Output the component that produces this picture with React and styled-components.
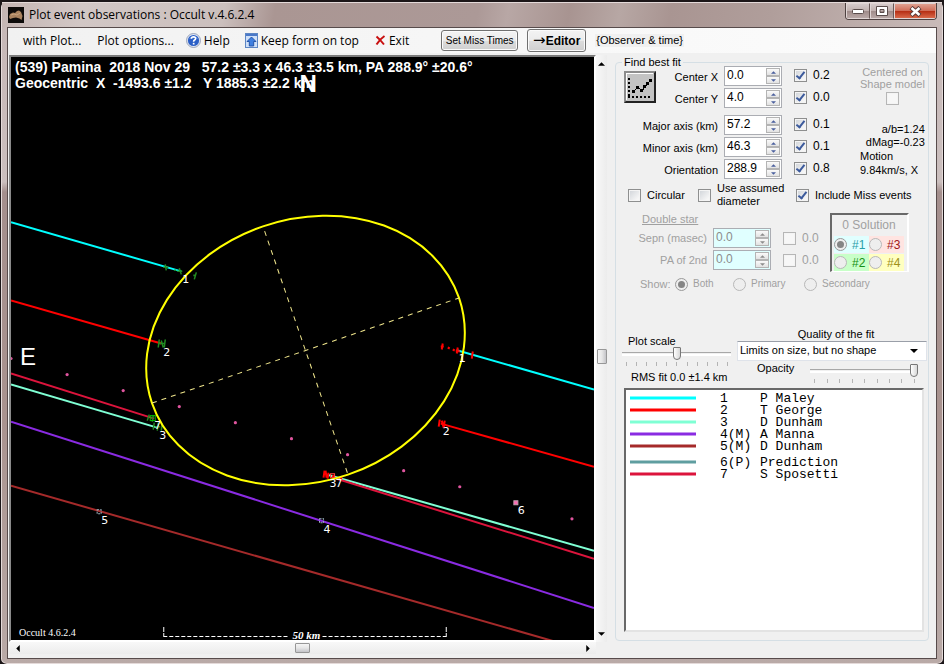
import React from "react";
import styled, { createGlobalStyle, css } from "styled-components";

const SANS = '"Liberation Sans", Arial, sans-serif';
const MENU = '"Open Sans", "Noto Sans", sans-serif';

const GlobalStyle = createGlobalStyle`
  *, *::before, *::after { box-sizing: border-box; }
  body { margin: 0; background: #1c1618; font: 12px/14px ${SANS}; color: #000; }
  button, input, select { font: inherit; color: inherit; margin: 0; }
`;

/* ---------- window frame ---------- */

const Window = styled.div`
  min-height: 100vh;
  display: flex;
  flex-direction: column;
  padding: 0 6px 5px;
  border: 1px solid #1c1618;
  border-top-width: 2px;
  border-bottom-width: 2px;
  border-radius: 7px;
  background: linear-gradient(180deg, #c6b7b6 0, #cbbfbe 180px, #a48f8d 190px, #a9938f 420px, #b9aaa7 100%);
  box-shadow: inset 0 0 0 1px #e4dad9;
`;

const TitleBar = styled.header`
  display: flex;
  align-items: center;
  height: 25px;
  margin: 0 -5px;
  padding: 0 5px 0 6px;
  gap: 5px;
  border-top: 1px solid #e4dad9;
  background: linear-gradient(100deg, #c4b5b3 0, #d2c7c5 80px, #cbbfbd 220px, #aa9693 270px, #ac9997 470px, #b8a7a5 500px, #a89491 560px, #b7a7a4 610px, #a99592 660px, #b09e9b 760px, #c9bbb9 100%);
`;

const Title = styled.h1`
  flex: 1;
  margin: 0;
  font: 12px/16px ${MENU};
`;

const Captions = styled.div`
  display: flex;
  align-self: flex-start;
  height: 17px;
  border: 1px solid #4e4140;
  border-top: 0;
  border-radius: 0 0 4px 4px;
  overflow: hidden;
`;

const Caption = styled.button`
  display: grid;
  place-items: center;
  width: ${(p) => (p.$close ? 42 : 24)}px;
  padding: 0;
  border: 1px solid #e0d5d4;
  border-right-color: ${(p) => (p.$close ? "#e59c8a" : "#6a5957")};
  background: ${(p) =>
    p.$close
      ? "linear-gradient(#e0a090 0, #cf6d58 48%, #b62f14 52%, #d9694a 100%)"
      : "linear-gradient(#d5caca 0, #c1b1af 48%, #a08c8a 52%, #b9a8a6 100%)"};
`;

const Client = styled.main`
  flex: 1;
  display: flex;
  flex-direction: column;
  border: 1px solid #574b4b;
  background: #f0f0f0;
`;

/* ---------- menu strip ---------- */

const MenuStrip = styled.nav`
  display: flex;
  align-items: center;
  height: 25px;
  padding-left: 15px;
  background: linear-gradient(90deg, #f1f1f1, #fcfcfc);
`;

const MenuItem = styled.button`
  display: flex;
  align-items: center;
  gap: 3px;
  margin-right: ${(p) => p.$after}px;
  padding: 0;
  border: 0;
  background: none;
  font: 12px/16px ${MENU};
  white-space: nowrap;
`;

const PushButton = styled.button`
  height: ${(p) => (p.$strong ? 23 : 21)}px;
  width: ${(p) => (p.$strong ? 59 : 77)}px;
  margin-right: 9px;
  padding: 0;
  border: 1px solid #707070;
  border-radius: 3px;
  background: linear-gradient(#f3f3f3 0, #ebebeb 50%, #dddddd 51%, #cfcfcf 100%);
  box-shadow: inset 0 0 0 1px #fbfbfb;
  font: ${(p) => (p.$strong ? `bold 12px/16px ${SANS}` : `10px/14px ${SANS}`)};
  white-space: nowrap;
`;

const ArrowGlyph = styled.span`
  font: 15px/12px "DejaVu Sans", sans-serif;
`;

const Hint = styled.span`
  padding: 0 1px;
  background: #f0f0f0;
  font-size: 11px;
  line-height: 13px;
`;

/* ---------- body ---------- */

const Body = styled.div`
  flex: 1;
  display: grid;
  grid-template-columns: minmax(0, 1fr) 11px 322px;
  grid-template-rows: minmax(0, 1fr) 12px;
  padding: 2px 7px 4px 1px;
`;

const PlotWell = styled.section`
  position: relative;
  border: 2px solid #fff;
  border-top-color: #7b7b7b;
  border-left-color: #8a8a8a;
  background: #000;
  overflow: hidden;
`;

const PlotSvg = styled.svg`
  display: block;
  width: 100%;
  height: 100%;
`;

const PlotHeading = styled.pre`
  position: absolute;
  top: 2px;
  left: 4px;
  margin: 0;
  color: #fff;
  font: bold 14px/16px ${SANS};
`;

const Bar = styled.div`
  display: flex;
  flex-direction: ${(p) => (p.$vertical ? "column" : "row")};
  align-items: center;
  justify-content: space-between;
  padding: ${(p) => (p.$vertical ? "3px 0" : "0 3px")};
  background: linear-gradient(${(p) => (p.$vertical ? "90deg" : "180deg")}, #f8f8f8, #ececec);
`;

const BarArrow = styled.button`
  display: grid;
  place-items: center;
  width: 11px;
  height: 11px;
  padding: 0;
  border: 0;
  background: none;
`;

const BarThumb = styled.div`
  width: ${(p) => (p.$vertical ? 10 : 15)}px;
  height: ${(p) => (p.$vertical ? 15 : 10)}px;
  margin-top: ${(p) => (p.$vertical ? 15 : 0)}px;
  border: 1px solid #979797;
  border-radius: 1px;
  background: linear-gradient(${(p) => (p.$vertical ? "90deg" : "180deg")}, #f5f5f5, #e6e6e6 50%, #c4c4c8);
`;

/* ---------- fit panel ---------- */

const Group = styled.fieldset`
  display: flex;
  flex-direction: column;
  min-width: 0;
  margin: 3px 0 1px 8px;
  padding: 0;
  border: 1px solid #d5dfe5;
  border-radius: 4px;
  font-size: 11px;
`;

const Legend = styled.legend`
  margin-left: 6px;
  padding: 0 2px;
  line-height: 8px;
`;

const FitGrid = styled.div`
  display: grid;
  grid-template-columns: 32px 56px 58px 60px 1fr;
  grid-template-rows: 20px 20px 25px 20px 20px;
  gap: 2px 6px;
  align-items: end;
  padding-left: 8px;
`;

const FitButton = styled.button`
  grid-column: 1;
  grid-row: 1 / 3;
  align-self: center;
  width: 32px;
  height: 32px;
  padding: 0;
  border: 2px solid;
  border-color: #8c8c8c #222 #222 #8c8c8c;
  background: #c3c3c3;
`;

const FitLabel = styled.label`
  grid-column: ${(p) => (p.$short ? "2" : "1 / 3")};
  grid-row: ${(p) => p.$row};
  text-align: right;
  line-height: 18px;
`;

const SpinBox = styled.div`
  ${(p) => p.$row && css`grid-column: 3; grid-row: ${p.$row};`}
  display: flex;
  width: 58px;
  height: 20px;
  padding: 1px;
  border: 1px solid #abadb3;
  background: ${(p) => (p.$off ? "#e0ffff" : "#fff")};
  color: ${(p) => (p.$off ? "#8c8c8c" : "#000")};
`;

const SpinInput = styled.input`
  flex: 1;
  min-width: 0;
  padding: 0 0 2px 1px;
  border: 0;
  background: none;
  font-size: 12px;
  line-height: 14px;
`;

const SpinButtons = styled.div`
  display: grid;
  grid-template-rows: 1fr 1fr;
  width: 14px;
`;

const SpinButton = styled.button`
  display: grid;
  place-items: center;
  padding: 0;
  border: 1px solid #b4b4b4;
  background: linear-gradient(#fafafa, #e2e2e2);
  color: ${(p) => (p.$off ? "#8c8c8c" : "#4a5f9e")};
`;

const Check = styled.label`
  ${(p) => p.$row && css`grid-column: 4; grid-row: ${p.$row}; padding-left: 6px; height: 18px; margin-bottom: 2px;`}
  display: flex;
  align-items: center;
  gap: 6px;
  color: ${(p) => (p.$off ? "#a0a0a0" : "#000")};
  font-size: ${(p) => (p.$value ? 12 : 11)}px;
  line-height: 13px;
  white-space: nowrap;
`;

const Box = styled.input`
  appearance: none;
  flex: none;
  display: grid;
  place-items: center;
  width: 13px;
  height: 13px;
  border: 1px solid #8e8f8f;
  box-shadow: inset 0 0 0 1px #f4f4f4;
  background: linear-gradient(135deg, #cfd3d8, #f6f6f6 80%);
  &:disabled { border-color: #b6b6b6; background: #f7f7f7; }
  &:checked::after {
    content: "";
    width: 5px;
    height: 9px;
    margin-bottom: 2px;
    border: solid #3c5a9c;
    border-width: 0 2px 2px 0;
    transform: rotate(38deg);
  }
`;

const Radio = styled.input`
  appearance: none;
  flex: none;
  display: grid;
  place-items: center;
  width: 13px;
  height: 13px;
  border: 1px solid #b8b8b8;
  border-radius: 50%;
  background: #eeeeee;
  &:checked { border-color: #999; }
  &:checked::after {
    content: "";
    width: 7px;
    height: 7px;
    border-radius: 50%;
    background: #858585;
  }
`;

const Side = styled.div`
  grid-column: 5;
  grid-row: 1 / 6;
  align-self: stretch;
  display: flex;
  flex-direction: column;
  padding-right: 5px;
`;

const ShapeModel = styled.label`
  display: flex;
  flex-direction: column;
  align-items: center;
  gap: 2px;
  margin-bottom: 18px;
  padding-left: 6px;
  color: #a0a0a0;
  line-height: 12px;
  text-align: center;
  white-space: nowrap;
`;

const SideText = styled.span`
  line-height: ${(p) => (p.$right ? 13 : 14)}px;
  text-align: ${(p) => (p.$right ? "right" : "left")};
  padding-left: 6px;
  white-space: nowrap;
`;

const Options = styled.div`
  display: grid;
  grid-template-columns: 70px 98px 1fr;
  align-items: center;
  height: 26px;
  margin-top: 3px;
  padding-left: 12px;
`;

const DoubleStar = styled.div`
  display: flex;
  align-items: flex-start;
  gap: 6px;
  padding: 4px 0 0 20px;
  color: #a0a0a0;
`;

const StarGrid = styled.div`
  display: grid;
  grid-template-columns: 71px 58px 47px;
  grid-template-rows: 14px 20px 20px;
  gap: 2px 6px;
  align-items: center;
`;

const StarTitle = styled.span`
  grid-column: 1 / 4;
  padding-left: 6px;
  text-decoration: underline;
`;

const StarLabel = styled.label`
  text-align: right;
  white-space: nowrap;
`;

const StarCheck = styled.div`
  padding-left: 6px;
`;

const Solutions = styled.div`
  display: grid;
  grid-template-columns: 1fr 1fr;
  grid-template-rows: 20px 17px 17px;
  row-gap: 1px;
  align-items: center;
  width: 79px;
  margin-top: 1px;
  padding-left: 2px;
  padding-right: 3px;
  border: 2px solid #fff;
  border-top-color: #696969;
  border-left-color: #696969;
  border-bottom-width: 1px;
`;

const SolutionTitle = styled.span`
  grid-column: 1 / 3;
  text-align: center;
  font-size: 12px;
`;

const Solution = styled.label`
  display: flex;
  align-items: center;
  gap: 5px;
  height: 17px;
  font-size: 12px;
  color: ${(p) => p.$ink};
  background: ${(p) => p.$paper};
`;

const ShowRow = styled.div`
  display: grid;
  grid-template-columns: 35px 58px 71px 1fr;
  align-items: center;
  height: 16px;
  margin-top: 4px;
  padding-left: 24px;
  color: #a0a0a0;
`;

const RadioLabel = styled.label`
  display: flex;
  align-items: center;
  gap: 5px;
  font-size: 10px;
`;

const ScaleRow = styled.div`
  display: flex;
  justify-content: space-between;
  margin-top: 36px;
  padding: 0 1px 0 6px;
`;

const ScalePane = styled.div`
  display: flex;
  flex-direction: column;
  width: 109px;
  padding-top: 7px;
`;

const ScaleLabel = styled.label`
  padding-left: 6px;
  line-height: 12px;
`;

const SliderPane = styled.div`
  flex: 1;
`;

const Slider = styled.input`
  appearance: none;
  display: block;
  width: 100%;
  height: 13px;
  background: linear-gradient(#a8a8a8, #a8a8a8) center 5px / 100% 1px no-repeat,
    linear-gradient(#fff, #fff) center 7px / 100% 2px no-repeat;
  &::-webkit-slider-thumb {
    appearance: none;
    width: 8px;
    height: 13px;
    border: 1px solid #777;
    border-radius: 1px 1px 4px 4px;
    background: linear-gradient(90deg, #fff, #d8d8d8);
  }
`;

const Ticks = styled.div`
  display: flex;
  justify-content: space-between;
  height: 4px;
  margin: 2px 3px 0 4px;
`;

const Tick = styled.i`
  width: 1px;
  background: #b4b4b4;
`;

const Rms = styled.output`
  padding: 4px 0 0 9px;
  white-space: nowrap;
  line-height: 14px;
`;

const QualityPane = styled.div`
  display: flex;
  flex-direction: column;
  width: 190px;
`;

const QualityLabel = styled.label`
  text-align: center;
  line-height: 13px;
  padding-left: 8px;
`;

const SelectBox = styled.div`
  display: grid;
  grid-template-columns: 1fr 16px;
  align-items: center;
  border: 1px solid #dfe3ea;
  border-top-color: #9a9fa8;
  background: #fff;
`;

const Select = styled.select`
  appearance: none;
  grid-area: 1 / 1 / 2 / 3;
  width: 100%;
  height: 18px;
  padding: 0 16px 2px 2px;
  border: 0;
  background: none;
  font-size: 11px;
`;

const SelectArrow = styled.svg`
  grid-area: 1 / 2;
  pointer-events: none;
`;

const OpacityRow = styled.div`
  display: flex;
  gap: 16px;
  padding: 3px 9px 0 20px;
`;

const OpacityLabel = styled.label`
  line-height: 8px;
`;

const ChordList = styled.div`
  flex: 1;
  margin: 4px 4px 8px 8px;
  padding: 3px 4px;
  border: 2px solid #e3e3e3;
  border-top-color: #696969;
  border-left-color: #696969;
  background: #fff;
`;

const ChordTable = styled.table`
  border-collapse: collapse;
  font: 13px/12px "Liberation Mono", "Courier New", monospace;
`;

const ChordCell = styled.td`
  height: ${(p) => (p.$spaced ? 16 : 12)}px;
  width: ${(p) => p.$width}px;
  padding: 0;
  vertical-align: bottom;
  white-space: pre;
`;

const Swatch = styled.svg`
  display: block;
  margin-bottom: 5px;
`;

/* ---------- icons ---------- */

const AppIcon = () => (
  <svg width="16" height="16" viewBox="0 0 16 16" aria-hidden="true">
    <rect width="16" height="16" fill="#0d0b0a" />
    <path d="M1 10 L2 7 L5 5.500 L7 6 L9 4 L11 3.500 L13 5 L14.500 9 L13.500 13 L11.500 11.500 L8 10.500 L5 11 L2 12 Z" fill="#a9835f" />
    <path d="M3 8 L6 7 L9 8 L12 6" stroke="#c9a37d" strokeWidth="1" fill="none" />
  </svg>
);

const HelpIcon = () => (
  <svg width="15" height="15" viewBox="0 0 15 15" aria-hidden="true">
    <circle cx="7.500" cy="7.500" r="7" fill="#dfe5f2" stroke="#8b96ad" strokeWidth="0.800" />
    <circle cx="7.500" cy="7.500" r="5.600" fill="#2b5fc6" />
    <path d="M3 6 A5 5 0 0 1 12 6 Q7.500 4 3 6" fill="#6d9aee" />
    <path d="M5.400 5.800 Q5.500 3.800 7.600 3.800 Q9.700 3.900 9.600 5.600 Q9.500 6.700 8.300 7.300 Q7.600 7.700 7.600 8.700" fill="none" stroke="#fff" strokeWidth="1.600" />
    <rect x="6.800" y="9.800" width="1.700" height="1.700" fill="#fff" />
  </svg>
);

const KeepIcon = () => (
  <svg width="13" height="15" viewBox="0 0 13 15" aria-hidden="true">
    <rect x="0.500" y="0.500" width="12" height="14" fill="#cfe0f8" stroke="#5d86c4" />
    <rect x="1" y="1" width="11" height="2" fill="#4a78c8" />
    <path d="M6.500 4 L11 8.500 H8.700 V13 H4.300 V8.500 H2 Z" fill="#3f7fe0" stroke="#1d4da3" strokeWidth="0.900" />
  </svg>
);

const ExitIcon = () => (
  <svg width="11" height="11" viewBox="0 0 11 11" aria-hidden="true">
    <path d="M1.500 1.500 Q5 4.500 9 9.500 M9.500 1 Q5 4 1.500 9.500" stroke="#c80f0f" strokeWidth="2" fill="none" />
  </svg>
);

const FitIcon = () => (
  <svg width="28" height="28" viewBox="0 0 28 28" shapeRendering="crispEdges" aria-hidden="true">
    <path d="M0 27 V0 H27" stroke="#fff" strokeWidth="2" fill="none" />
    <path d="M3 5 V23" stroke="#000" strokeWidth="2" strokeDasharray="2 2" />
    <path d="M2 24 H26" stroke="#000" strokeWidth="2" strokeDasharray="2 2" />
    <path d="M7 19 L12 14 L16 18 L22 10 L26 7" stroke="#000" strokeWidth="1" fill="none" />
    {[[6, 17], [10, 13], [14, 16], [17, 12], [20, 9], [23, 6]].map(([x, y]) => (
      <rect key={x} x={x} y={y} width="3" height="3" fill="#000" />
    ))}
  </svg>
);

const ARROWS = {
  up: "M0 4 L4 0 L8 4 Z",
  down: "M0 0 L8 0 L4 4 Z",
  left: "M4 0 L4 8 L0 4 Z",
  right: "M0 0 L4 4 L0 8 Z",
};

const Arrow = ({ to, size = 7 }) => {
  const tall = to === "left" || to === "right";
  return (
    <svg
      width={tall ? Math.ceil(size / 2) : size}
      height={tall ? size : Math.ceil(size / 2)}
      viewBox={tall ? "0 0 4 8" : "0 0 8 4"}
      aria-hidden="true"
    >
      <path d={ARROWS[to]} fill="currentColor" />
    </svg>
  );
};

/* ---------- plot ---------- */

const CHORD_LINES = [
  ["#00ffff", 11, 222, 181, 271],
  ["#00ffff", 457, 350, 593, 389],
  ["#ff0000", 11, 300, 161, 343],
  ["#ff0000", 440, 423, 593, 466],
  ["#7fffd4", 11, 384, 157, 427],
  ["#7fffd4", 327, 474, 593, 550],
  ["#dc143c", 11, 373, 154, 418],
  ["#dc143c", 333, 477, 593, 558],
  ["#8a2be2", 11, 421, 593, 607],
  ["#a52a2a", 11, 485, 552, 640],
];

const TRACK_DOTS = [0, 1, 2, 3, 4, 5, 6, 7, 8, 10].map((n) => [11 + 56 * n, 358 + 16 * n]);

const CHORD_LABELS = [
  ["1", 182, 283], ["2", 163, 355], ["7", 154, 428], ["3", 159, 438],
  ["1", 458, 361], ["2", 442, 434], ["3", 329, 486], ["7", 335, 486],
  ["4", 323, 532], ["5", 101, 523], ["6", 517, 513],
];

const GREEN_MARKS =
  "M165 264 L166 270 M163 267 L168 267 M179 268 L181 274 M177 271 L182 271 M174 270 L176 270 " +
  "M193 275 L195 275 M196 272 L194 279 M159 339 L158 347 M161 340 L163 347 M165 339 L164 347 M159 343 L165 343 " +
  "M149 414 L147 420 M151 417 L153 417 M153 415 L152 421 M154 422 L153 429 M158 422 L157 430 M155 426 L160 426 M162 423 L161 430";

const RED_MARKS =
  "M442 343 L441 349 M440 346 L443 346 M447 347 L449 348 M452 349 L454 350 M457 347 L456 353 M455 350 L459 351 " +
  "M472 351 L471 358 M439 419 L438 426 M441 420 L443 427 M444 420 L443 427 " +
  "M324 470 L323 477 M325 470 L326 477 M328 472 L327 478 M333 474 L332 478 M341 476 L340 480";

const OccultPlot = () => (
  <PlotSvg viewBox="11 57 582 582" preserveAspectRatio="xMinYMin slice" role="img" aria-label="Event observation chords">
    {CHORD_LINES.map(([color, x1, y1, x2, y2], i) => (
      <line key={i} x1={x1} y1={y1} x2={x2} y2={y2} stroke={color} strokeWidth="2" />
    ))}
    <path d={GREEN_MARKS} stroke="#228b22" strokeWidth="1.500" />
    <rect x="150" y="415" width="5" height="5" fill="none" stroke="#00c000" />
    <path d={RED_MARKS} stroke="#ff0000" strokeWidth="2" />
    <rect x="330" y="473" width="4" height="4" fill="none" stroke="#ff4040" />
    <g transform="rotate(-18.900 305 350)">
      <ellipse cx="305" cy="350" rx="162" ry="131" fill="none" stroke="#ffff00" strokeWidth="2" />
      <path d="M143 350 H467 M305 224 V481" stroke="#f0e68c" strokeWidth="1" strokeDasharray="5 5" />
    </g>
    {TRACK_DOTS.map(([x, y]) => (
      <circle key={x} cx={x} cy={y} r="1.600" fill="#e0559f" />
    ))}
    <rect x="513" y="500" width="4" height="4" fill="#ff69b4" stroke="#c0a0b0" strokeWidth="1" />
    <rect x="319" y="518" width="4" height="4" fill="none" stroke="#9fb6c4" strokeDasharray="2 1" />
    <rect x="97" y="509" width="4" height="4" fill="none" stroke="#9fb6c4" strokeDasharray="2 1" />
    <g fill="#fff" fontFamily="DejaVu Sans, sans-serif" fontSize="11">
      {CHORD_LABELS.map(([text, x, y]) => (
        <text key={`${x}-${y}`} x={x} y={y}>{text}</text>
      ))}
    </g>
    <text x="20" y="364" fill="#fff" fontFamily="Liberation Sans, sans-serif" fontSize="24">E</text>
    <text x="299" y="92" fill="#fff" fontFamily="Liberation Sans, sans-serif" fontSize="24" fontWeight="bold">N</text>
    <path d="M163.500 626 V635 M445.500 626 V635" stroke="#fff" strokeDasharray="5 1" />
    <path d="M163 635.500 H289 M322 635.500 H446" stroke="#fff" strokeDasharray="4 2" />
    <g fill="#fff" fontFamily="Liberation Serif, serif">
      <text x="292" y="638" fontSize="11" fontStyle="italic" fontWeight="bold">50 km</text>
      <text x="19" y="635" fontSize="10">Occult 4.6.2.4</text>
    </g>
  </PlotSvg>
);

/* ---------- composed controls ---------- */

const Spin = ({ id, value, off, row }) => (
  <SpinBox $off={off} $row={row}>
    <SpinInput id={id} defaultValue={value} disabled={off} />
    <SpinButtons>
      <SpinButton $off={off} disabled={off} aria-label="Increase"><Arrow to="up" size={5} /></SpinButton>
      <SpinButton $off={off} disabled={off} aria-label="Decrease"><Arrow to="down" size={5} /></SpinButton>
    </SpinButtons>
  </SpinBox>
);

const ScrollStrip = ({ vertical, label }) => (
  <Bar $vertical={vertical} role="group" aria-label={label}>
    <BarArrow aria-label="Back"><Arrow to={vertical ? "up" : "left"} size={7} /></BarArrow>
    <BarThumb $vertical={vertical} />
    <BarArrow aria-label="Forward"><Arrow to={vertical ? "down" : "right"} size={7} /></BarArrow>
  </Bar>
);

const TickRow = ({ count }) => (
  <Ticks>{Array.from({ length: count }, (_, i) => <Tick key={i} />)}</Ticks>
);

const FIT_FIELDS = [
  { id: "cx", label: "Center X", value: "0.0", error: "0.2", short: true },
  { id: "cy", label: "Center Y", value: "4.0", error: "0.0", short: true },
  { id: "major", label: "Major axis (km)", value: "57.2", error: "0.1" },
  { id: "minor", label: "Minor axis (km)", value: "46.3", error: "0.1" },
  { id: "orient", label: "Orientation", value: "288.9", error: "0.8" },
];

const STAR_FIELDS = [
  { id: "sepn", label: "Sepn (masec)" },
  { id: "pa2", label: "PA of 2nd" },
];

const SOLUTIONS = [
  ["#1", "#2aa0a8", "#e0ffff"],
  ["#3", "#a01818", "#ffe4e1"],
  ["#2", "#159015", "#c8ffc8"],
  ["#4", "#a09018", "#ffffc0"],
];

const CHORDS = [
  ["#00ffff", "1", "P Maley"],
  ["#ff0000", "2", "T George"],
  ["#7fffd4", "3", "D Dunham"],
  ["#8a2be2", "4(M)", "A Manna"],
  ["#a52a2a", "5(M)", "D Dunham"],
  ["#5f9ea0", "6(P)", "Prediction", true],
  ["#dc143c", "7", "S Sposetti"],
];

export default function App() {
  return (
    <>
      <GlobalStyle />
      <Window>
        <TitleBar>
          <AppIcon />
          <Title>Plot event observations : Occult v.4.6.2.4</Title>
          <Captions>
            <Caption aria-label="Minimize">
              <svg width="12" height="5"><rect x="0.500" y="0.500" width="11" height="4" rx="1" fill="#fff" stroke="#5a4c4b" /></svg>
            </Caption>
            <Caption aria-label="Maximize">
              <svg width="12" height="10"><path d="M0.500 0.500 H11.500 V9.500 H0.500 Z M4 3.500 V6.500 H8 V3.500 Z" fill="#fff" fillRule="evenodd" stroke="#5a4c4b" /></svg>
            </Caption>
            <Caption $close aria-label="Close">
              <svg width="13" height="11"><path d="M2 1.500 L11 9.500 M11 1.500 L2 9.500" stroke="#5a3a38" strokeWidth="4.500" /><path d="M2.500 2 L10.500 9 M10.500 2 L2.500 9" stroke="#fff" strokeWidth="2.500" /></svg>
            </Caption>
          </Captions>
        </TitleBar>
        <Client>
          <MenuStrip>
            <MenuItem $after={16}>with Plot...</MenuItem>
            <MenuItem $after={12}>Plot options...</MenuItem>
            <MenuItem $after={15}><HelpIcon />Help</MenuItem>
            <MenuItem $after={16}><KeepIcon />Keep form on top</MenuItem>
            <MenuItem $after={32}><ExitIcon />Exit</MenuItem>
            <PushButton>Set Miss Times</PushButton>
            <PushButton $strong><ArrowGlyph>→</ArrowGlyph>Editor</PushButton>
            <Hint>{"{Observer & time}"}</Hint>
          </MenuStrip>
          <Body>
            <PlotWell>
              <OccultPlot />
              <PlotHeading>
                {"(539) Pamina  2018 Nov 29   57.2 ±3.3 x 46.3 ±3.5 km, PA 288.9° ±20.6°\nGeocentric  X  -1493.6 ±1.2   Y 1885.3 ±2.2 km"}
              </PlotHeading>
            </PlotWell>
            <ScrollStrip vertical label="Vertical scroll" />
            <Group>
              <Legend>Find best fit</Legend>
              <FitGrid>
                <FitButton aria-label="Find best fit"><FitIcon /></FitButton>
                {FIT_FIELDS.map((f, i) => (
                  <React.Fragment key={f.id}>
                    <FitLabel htmlFor={f.id} $row={i + 1} $short={f.short}>{f.label}</FitLabel>
                    <Spin id={f.id} value={f.value} row={i + 1} />
                    <Check $row={i + 1} $value><Box type="checkbox" defaultChecked />{f.error}</Check>
                  </React.Fragment>
                ))}
                <Side>
                  <ShapeModel><span>Centered on<br />Shape model</span><Box type="checkbox" disabled /></ShapeModel>
                  <SideText $right>a/b=1.24</SideText>
                  <SideText $right>dMag=-0.23</SideText>
                  <SideText>Motion</SideText>
                  <SideText>9.84km/s, X</SideText>
                </Side>
              </FitGrid>
              <Options>
                <Check><Box type="checkbox" />Circular</Check>
                <Check><Box type="checkbox" /><span>Use assumed<br />diameter</span></Check>
                <Check><Box type="checkbox" defaultChecked />Include Miss events</Check>
              </Options>
              <DoubleStar>
                <StarGrid>
                  <StarTitle>Double star</StarTitle>
                  {STAR_FIELDS.map((f) => (
                    <React.Fragment key={f.id}>
                      <StarLabel htmlFor={f.id}>{f.label}</StarLabel>
                      <Spin id={f.id} value="0.0" off />
                      <StarCheck><Check $off $value><Box type="checkbox" disabled />0.0</Check></StarCheck>
                    </React.Fragment>
                  ))}
                </StarGrid>
                <Solutions>
                  <SolutionTitle>0 Solution</SolutionTitle>
                  {SOLUTIONS.map(([name, ink, paper], i) => (
                    <Solution key={name} $ink={ink} $paper={paper}>
                      <Radio type="radio" name="solution" defaultChecked={i === 0} disabled />{name}
                    </Solution>
                  ))}
                </Solutions>
              </DoubleStar>
              <ShowRow>
                <span>Show:</span>
                {["Both", "Primary", "Secondary"].map((name, i) => (
                  <RadioLabel key={name}>
                    <Radio type="radio" name="show" defaultChecked={i === 0} disabled />{name}
                  </RadioLabel>
                ))}
              </ShowRow>
              <ScaleRow>
                <ScalePane>
                  <ScaleLabel htmlFor="scale">Plot scale</ScaleLabel>
                  <Slider id="scale" type="range" defaultValue="50" />
                  <TickRow count={11} />
                  <Rms>RMS fit 0.0 ±1.4 km</Rms>
                </ScalePane>
                <QualityPane>
                  <QualityLabel htmlFor="quality">Quality of the fit</QualityLabel>
                  <SelectBox>
                    <Select id="quality" defaultValue="limits">
                      <option value="limits">Limits on size, but no shape</option>
                    </Select>
                    <SelectArrow width="8" height="4" viewBox="0 0 8 4"><path d={ARROWS.down} /></SelectArrow>
                  </SelectBox>
                  <OpacityRow>
                    <OpacityLabel htmlFor="opacity">Opacity</OpacityLabel>
                    <SliderPane>
                      <Slider id="opacity" type="range" defaultValue="100" />
                      <TickRow count={9} />
                    </SliderPane>
                  </OpacityRow>
                </QualityPane>
              </ScaleRow>
              <ChordList>
                <ChordTable>
                  <tbody>
                    {CHORDS.map(([color, code, name, spaced]) => (
                      <tr key={code}>
                        <ChordCell $width={90} $spaced={spaced}>
                          <Swatch width="66" height="4"><rect width="66" height="4" fill={color} opacity="0.5" /><rect y="1" width="66" height="2" fill={color} /></Swatch>
                        </ChordCell>
                        <ChordCell $width={40} $spaced={spaced}>{code}</ChordCell>
                        <ChordCell $spaced={spaced}>{name}</ChordCell>
                      </tr>
                    ))}
                  </tbody>
                </ChordTable>
              </ChordList>
            </Group>
            <ScrollStrip label="Horizontal scroll" />
          </Body>
        </Client>
      </Window>
    </>
  );
}
